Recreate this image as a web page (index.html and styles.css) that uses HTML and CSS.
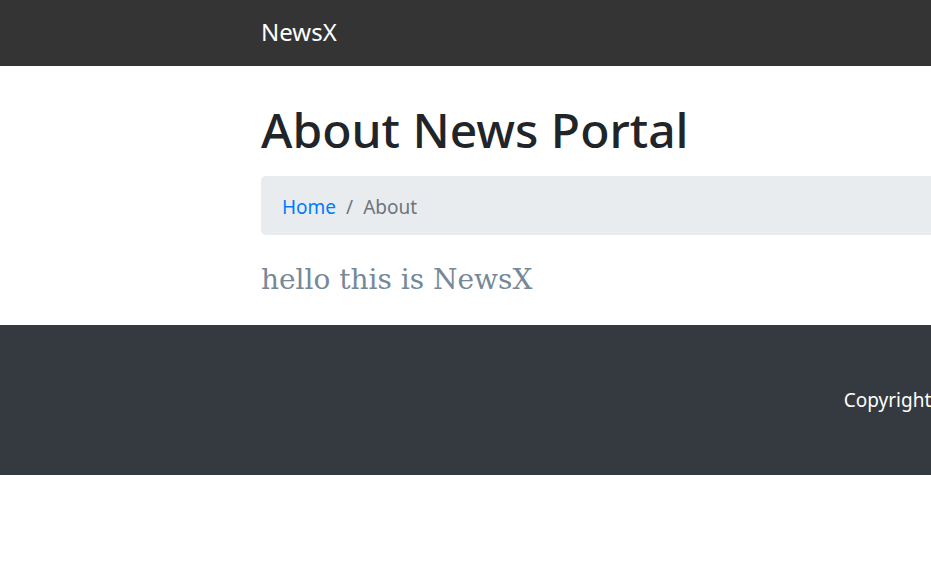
FILE: index.html
```html
<!DOCTYPE html>
<html lang="en">
<head>
<meta charset="utf-8">
<title>About - NewsX</title>
<link rel="stylesheet" href="styles.css">
</head>
<body>
<nav class="navbar">
  <div class="container">
    <a class="brand" href="#">NewsX</a>
  </div>
</nav>
<main class="container main">
  <h1 class="title">About News Portal</h1>
  <ol class="breadcrumb">
    <li class="crumb"><a href="#">Home</a></li>
    <li class="crumb active">About</li>
  </ol>
  <p class="lead-text">hello this is NewsX</p>
</main>
<footer class="footer">
  <div class="container footer-inner">
    <p class="copy">Copyright &copy; NewsX 2020</p>
  </div>
</footer>
</body>
</html>
```

FILE: styles.css
```css
html, body {
  margin: 0;
  padding: 0;
  overflow: hidden;
  background: #fff;
}
body {
  font-family: "Noto Sans", "Open Sans", sans-serif;
  color: #212529;
  width: 1910px;
}
.container {
  width: 1425px;
  margin: 0 0 0 242px;
  padding: 0 19px;
  box-sizing: border-box;
}
.navbar {
  background: #343434;
  height: 66px;
  display: flex;
  align-items: center;
}
.brand {
  color: #fff;
  text-decoration: none;
  font-size: 24px;
  line-height: 30px;
  display: block;
  margin-top: -2px;
}
.main {
  padding-top: 34px;
  padding-bottom: 25px;
}
.title {
  font-size: 48px;
  font-weight: 500;
  line-height: 60px;
  margin: 0 0 16px;
}
.breadcrumb {
  list-style: none;
  margin: 0 0 25px;
  padding: 17px 21px 13px;
  background: #e9ecef;
  border-radius: 5px;
  display: flex;
  font-size: 19px;
  line-height: 29px;
}
.crumb a {
  color: #007bff;
  text-decoration: none;
}
.crumb.active {
  color: #6c757d;
}
.crumb + .crumb::before {
  content: "/";
  color: #6c757d;
  padding: 0 10px;
}
.lead-text {
  font-family: "DejaVu Serif", Georgia, serif;
  color: #778899;
  font-size: 28px;
  line-height: 40px;
  margin: 0;
}
.footer {
  background: #343a40;
  height: 150px;
  display: flex;
  align-items: center;
}
.footer-inner {
  display: flex;
  justify-content: center;
}
.copy {
  color: #fff;
  font-size: 19px;
  margin: 0;
  padding-left: 0;
}
```
